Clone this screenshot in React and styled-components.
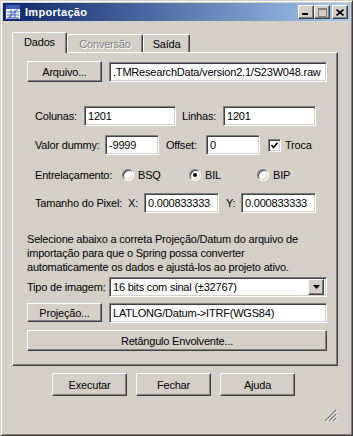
import React from "react";
import styled, { createGlobalStyle, css } from "styled-components";

const GlobalStyle = createGlobalStyle`
  html, body {
    margin: 0;
    padding: 0;
    background: #d4d0c8;
  }
  body {
    font: 11px "Liberation Sans", Arial, sans-serif;
    letter-spacing: -0.2px;
    color: #000;
  }
`;

const raised = css`
  border: 1px solid;
  border-color: #fff #404040 #404040 #fff;
  box-shadow: inset -1px -1px 0 #808080, inset 1px 1px 0 #d4d0c8;
`;

const sunken = css`
  border: 1px solid;
  border-color: #808080 #fff #fff #808080;
  box-shadow: inset 1px 1px 0 #404040, inset -1px -1px 0 #d4d0c8;
`;

const Window = styled.div`
  width: 353px;
  height: 436px;
  box-sizing: border-box;
  background: #d4d0c8;
  border: 1px solid;
  border-color: #d4d0c8 #404040 #404040 #d4d0c8;
  box-shadow: inset 1px 1px 0 #fff, inset -1px -1px 0 #808080;
  padding: 2px;
  display: flex;
  flex-direction: column;
  position: relative;
`;

const TitleBar = styled.div`
  height: 18px;
  display: flex;
  align-items: center;
  padding: 0 2px 0 2px;
  background: linear-gradient(to right, #0a246a, #a6caf0);
  color: #fff;
  font-weight: bold;
  font-size: 11px;
`;

const TitleText = styled.span`
  margin-left: 4px;
  flex: 1;
  letter-spacing: 0.3px;
`;

const TitleBtn = styled.div`
  width: 16px;
  height: 14px;
  box-sizing: border-box;
  background: #d4d0c8;
  ${raised};
  display: flex;
  align-items: center;
  justify-content: center;
  margin-left: ${(p) => (p.$gap ? "2px" : "0")};
`;

const Body = styled.div`
  flex: 1;
  padding: 10px 12px 0 9px;
  display: flex;
  flex-direction: column;
`;

const TabStrip = styled.div`
  display: flex;
  align-items: flex-end;
  height: 21px;
  padding-left: 2px;
  position: relative;
  z-index: 1;
`;

const Tab = styled.div`
  box-sizing: border-box;
  height: ${(p) => (p.$active ? "21px" : "18px")};
  margin-left: ${(p) => (p.$active ? "-2px" : "0")};
  margin-bottom: ${(p) => (p.$active ? "-1px" : "0")};
  width: ${(p) => p.$w}px;
  display: flex;
  align-items: center;
  justify-content: center;
  padding-bottom: ${(p) => (p.$active ? "2px" : "0")};
  background: #d4d0c8;
  border-top: 1px solid #fff;
  border-left: 1px solid #fff;
  border-right: 1px solid #404040;
  box-shadow: inset -1px 0 0 #808080;
  border-radius: 2px 2px 0 0;
  color: ${(p) => (p.$disabled ? "#808080" : "#000")};
  text-shadow: ${(p) => (p.$disabled ? "1px 1px 0 #fff" : "none")};
`;

const Panel = styled.div`
  box-sizing: border-box;
  width: 326px;
  border: 1px solid;
  border-color: #fff #404040 #404040 #fff;
  box-shadow: inset -1px -1px 0 #808080;
  padding: 8px 10px 14px 14px;
  display: flex;
  flex-direction: column;
`;

const Row = styled.div`
  display: flex;
  align-items: center;
  height: ${(p) => p.$h || 20}px;
  margin-top: ${(p) => p.$mt || 0}px;
  padding-left: ${(p) => p.$indent || 0}px;
`;

const Label = styled.span`
  box-sizing: border-box;
  width: ${(p) => (p.$w ? `${p.$w}px` : "auto")};
  padding-left: ${(p) => p.$pl || 0}px;
  flex: none;
  white-space: nowrap;
`;

const Field = styled.div`
  box-sizing: border-box;
  width: ${(p) => (p.$w ? `${p.$w}px` : "auto")};
  flex: ${(p) => (p.$w ? "none" : "1")};
  height: ${(p) => p.$h || 20}px;
  background: #fff;
  ${sunken};
  padding: 0 3px;
  display: flex;
  align-items: center;
  white-space: nowrap;
  overflow: hidden;
`;

const Button = styled.div`
  box-sizing: border-box;
  width: ${(p) => (p.$w ? `${p.$w}px` : "auto")};
  flex: ${(p) => (p.$w ? "none" : "1")};
  height: ${(p) => p.$h || 21}px;
  background: #d4d0c8;
  ${raised};
  display: flex;
  align-items: center;
  justify-content: center;
  margin-right: ${(p) => p.$mr || 0}px;
`;

const Check = styled.div`
  box-sizing: border-box;
  width: 13px;
  height: 13px;
  flex: none;
  background: #fff;
  ${sunken};
  display: flex;
  align-items: center;
  justify-content: center;
  margin: 0 4px 0 8px;
`;

const Radio = styled.div`
  box-sizing: border-box;
  width: 12px;
  height: 12px;
  flex: none;
  border-radius: 50%;
  background: #fff;
  border: 1px solid;
  border-color: #808080 #fff #fff #808080;
  box-shadow: inset 1px 1px 0 #404040, inset -1px -1px 0 #d4d0c8;
  display: flex;
  align-items: center;
  justify-content: center;
  margin-right: 4px;
  &::after {
    content: "";
    width: 4px;
    height: 4px;
    border-radius: 50%;
    background: ${(p) => (p.$on ? "#000" : "transparent")};
  }
`;

const RadioItem = styled.div`
  display: flex;
  align-items: center;
  width: ${(p) => p.$w}px;
`;

const Paragraph = styled.p`
  margin: 19px 0 0 0;
  line-height: 14px;
`;

const Combo = styled(Field)`
  padding-right: 2px;
  justify-content: space-between;
`;

const DropBtn = styled.div`
  box-sizing: border-box;
  width: 16px;
  height: 16px;
  background: #d4d0c8;
  ${raised};
  display: flex;
  align-items: center;
  justify-content: center;
`;

const Footer = styled.div`
  display: flex;
  justify-content: center;
  gap: 9px;
  margin-top: 7px;
  padding-right: 3px;
`;

const Grip = styled.div`
  position: absolute;
  right: 15px;
  bottom: 13px;
  width: 13px;
  height: 13px;
`;

function AppIcon() {
  return (
    <svg width="16" height="16" viewBox="0 0 16 16">
      <rect x="0.5" y="0.5" width="15" height="15" fill="#fff" stroke="#1c2f7a" />
      <rect x="1" y="1" width="14" height="4" fill="#3a5bb8" />
      <path d="M3 14 L13 5 M2 11 H14 M2 8 H14 M6 6 V14 M10 6 V14" stroke="#4060c0" strokeWidth="1" fill="none" />
      <path d="M2 14 L14 14" stroke="#223a90" />
    </svg>
  );
}

export default function App() {
  return (
    <>
      <GlobalStyle />
      <Window>
        <TitleBar>
          <AppIcon />
          <TitleText>Importação</TitleText>
          <TitleBtn>
            <svg width="8" height="8" viewBox="0 0 8 8">
              <rect x="0" y="5" width="6" height="2" fill="#000" />
            </svg>
          </TitleBtn>
          <TitleBtn>
            <svg width="9" height="9" viewBox="0 0 9 9">
              <rect x="0.5" y="0.5" width="8" height="8" fill="none" stroke="#808080" />
              <rect x="0" y="0" width="9" height="2" fill="#808080" />
            </svg>
          </TitleBtn>
          <TitleBtn $gap>
            <svg width="8" height="7" viewBox="0 0 8 7">
              <path d="M0.5 0.5 L7.5 6.5 M7.5 0.5 L0.5 6.5" stroke="#000" strokeWidth="1.6" />
            </svg>
          </TitleBtn>
        </TitleBar>
        <Body>
          <TabStrip>
            <Tab $active $w={55}>Dados</Tab>
            <Tab $disabled $w={76}>Conversão</Tab>
            <Tab $w={47}>Saída</Tab>
          </TabStrip>
          <Panel>
            <Row $h={21}>
              <Button $w={75} $mr={7}>Arquivo...</Button>
              <Field $h={20}>.TMResearchData/version2.1/S23W048.raw</Field>
            </Row>
            <Row $mt={24} $indent={8}>
              <Label $w={49}>Colunas:</Label>
              <Field $w={92}>1201</Field>
              <Label $w={47} $pl={6}>Linhas:</Label>
              <Field $w={93}>1201</Field>
            </Row>
            <Row $mt={9} $indent={8}>
              <Label $w={70}>Valor dummy:</Label>
              <Field $w={54}>-9999</Field>
              <Label $w={47} $pl={7}>Offset:</Label>
              <Field $w={54}>0</Field>
              <Check>
                <svg width="7" height="7" viewBox="0 0 7 7">
                  <path d="M0.5 3 L2.5 5.5 L6.5 0.8" stroke="#000" strokeWidth="1.6" fill="none" />
                </svg>
              </Check>
              <Label>Troca</Label>
            </Row>
            <Row $mt={10} $indent={8}>
              <Label $w={87}>Entrelaçamento:</Label>
              <RadioItem $w={67}>
                <Radio />
                BSQ
              </RadioItem>
              <RadioItem $w={68}>
                <Radio $on />
                BIL
              </RadioItem>
              <RadioItem $w={60}>
                <Radio />
                BIP
              </RadioItem>
            </Row>
            <Row $mt={8} $indent={8}>
              <Label $w={93}>Tamanho do Pixel:</Label>
              <Label $w={16}>X:</Label>
              <Field $w={75}>0.000833333</Field>
              <Label $w={22} $pl={7}>Y:</Label>
              <Field $w={75}>0.000833333</Field>
            </Row>
            <Paragraph>
              Selecione abaixo a correta Projeção/Datum do arquivo de
              <br />
              importação para que o Spring possa converter
              <br />
              automaticamente os dados e ajustá-los ao projeto ativo.
            </Paragraph>
            <Row $mt={3}>
              <Label $w={82}>Tipo de imagem:</Label>
              <Combo>
                <span>16 bits com sinal (±32767)</span>
                <DropBtn>
                  <svg width="7" height="4" viewBox="0 0 7 4">
                    <path d="M0 0 H7 L3.5 4 Z" fill="#000" />
                  </svg>
                </DropBtn>
              </Combo>
            </Row>
            <Row $mt={6} $h={19}>
              <Button $w={75} $h={19} $mr={7}>Projeção...</Button>
              <Field $h={20}>LATLONG/Datum-&gt;ITRF(WGS84)</Field>
            </Row>
            <Row $mt={8} $h={21}>
              <Button $h={21}>Retângulo Envolvente...</Button>
            </Row>
          </Panel>
          <Footer>
            <Button $w={75} $h={23}>Executar</Button>
            <Button $w={75} $h={23}>Fechar</Button>
            <Button $w={75} $h={23}>Ajuda</Button>
          </Footer>
        </Body>
        <Grip>
          <svg width="13" height="13" viewBox="0 0 13 13">
            <path d="M12 1 L1 12 M12 5 L5 12 M12 9 L9 12" stroke="#808080" strokeWidth="1.2" />
            <path d="M13 2 L2 13 M13 6 L6 13 M13 10 L10 13" stroke="#fff" strokeWidth="1" />
          </svg>
        </Grip>
      </Window>
    </>
  );
}
